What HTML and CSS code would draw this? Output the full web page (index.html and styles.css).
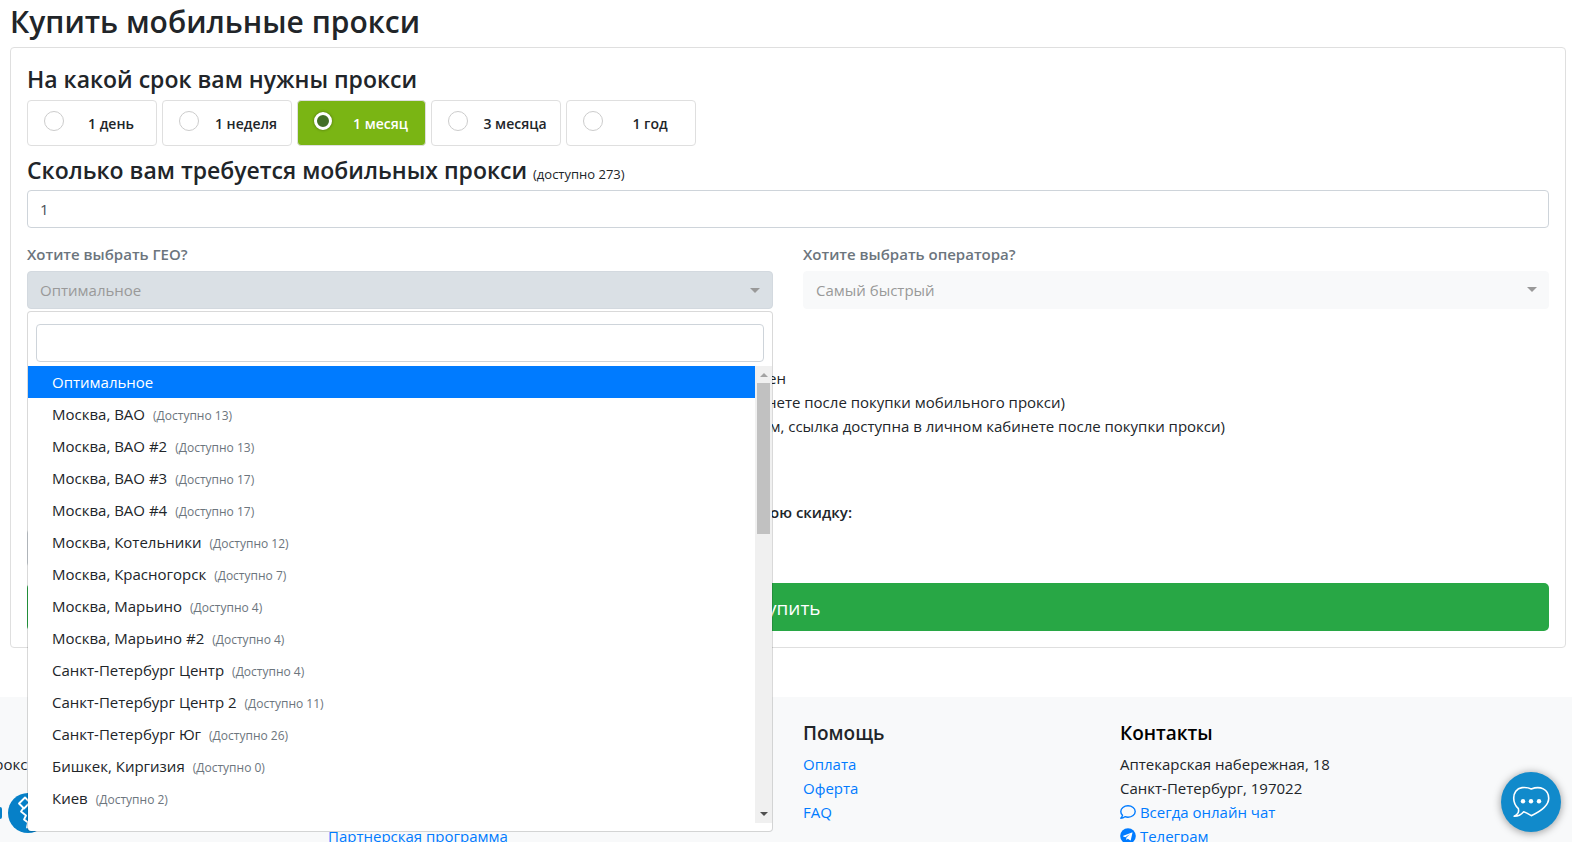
FILE: index.html
```html
<!DOCTYPE html>
<html lang="ru">
<head>
<meta charset="utf-8">
<title>Купить мобильные прокси</title>
<link rel="stylesheet" href="styles.css">
</head>
<body>
<main class="page">
  <h1 class="title">Купить мобильные прокси</h1>
  <form class="card">
    <fieldset class="terms">
      <legend class="heading">На какой срок вам нужны прокси</legend>
      <div class="term-list">
        <label class="term"><input class="term-radio" type="radio" name="term"><span class="term-text">1 день</span></label>
        <label class="term"><input class="term-radio" type="radio" name="term"><span class="term-text">1 неделя</span></label>
        <label class="term term-active"><input class="term-radio" type="radio" name="term" checked><span class="term-text">1 месяц</span></label>
        <label class="term"><input class="term-radio" type="radio" name="term"><span class="term-text">3 месяца</span></label>
        <label class="term"><input class="term-radio" type="radio" name="term"><span class="term-text">1 год</span></label>
      </div>
    </fieldset>
    <label class="heading count-label" for="count">Сколько вам требуется мобильных прокси <small class="count-note">(доступно 273)</small></label>
    <input class="field" id="count" type="text" value="1">
    <div class="choices">
      <div class="choice">
        <label class="choice-label" for="geo">Хотите выбрать ГЕО?</label>
        <button class="picker picker-open" id="geo" type="button" aria-expanded="true">Оптимальное</button>
        <div class="menu">
          <input class="field menu-search" type="text" aria-label="Поиск">
          <div class="menu-body">
            <ul class="options" role="listbox">
              <li class="option option-active" role="option" aria-selected="true">Оптимальное</li>
              <li class="option" role="option">Москва, ВАО<small class="stock">(Доступно 13)</small></li>
              <li class="option" role="option">Москва, ВАО #2<small class="stock">(Доступно 13)</small></li>
              <li class="option" role="option">Москва, ВАО #3<small class="stock">(Доступно 17)</small></li>
              <li class="option" role="option">Москва, ВАО #4<small class="stock">(Доступно 17)</small></li>
              <li class="option" role="option">Москва, Котельники<small class="stock">(Доступно 12)</small></li>
              <li class="option" role="option">Москва, Красногорск<small class="stock">(Доступно 7)</small></li>
              <li class="option" role="option">Москва, Марьино<small class="stock">(Доступно 4)</small></li>
              <li class="option" role="option">Москва, Марьино #2<small class="stock">(Доступно 4)</small></li>
              <li class="option" role="option">Санкт-Петербург Центр<small class="stock">(Доступно 4)</small></li>
              <li class="option" role="option">Санкт-Петербург Центр 2<small class="stock">(Доступно 11)</small></li>
              <li class="option" role="option">Санкт-Петербург Юг<small class="stock">(Доступно 26)</small></li>
              <li class="option" role="option">Бишкек, Киргизия<small class="stock">(Доступно 0)</small></li>
              <li class="option" role="option">Киев<small class="stock">(Доступно 2)</small></li>
            </ul>
            <div class="scroll"><span class="scroll-up"></span><span class="scroll-thumb"></span><span class="scroll-down"></span></div>
          </div>
        </div>
      </div>
      <div class="choice">
        <label class="choice-label" for="operator">Хотите выбрать оператора?</label>
        <div class="select-wrap"><select class="picker" id="operator"><option>Самый быстрый</option></select></div>
      </div>
    </div>
    <div class="notes">
      <p class="note note-short">обмен</p>
      <p class="note note-medium">кабинете после покупки мобильного прокси)</p>
      <p class="note note-long">м, ссылка доступна в личном кабинете после покупки прокси)</p>
    </div>
    <label class="promo-label" for="promo">свою скидку:</label>
    <input class="field promo" id="promo" type="text">
    <button class="buy" type="button">Купить</button>
  </form>
</main>
<footer class="footer">
  <div class="about">
    <p class="about-text">прокси</p>
    <div class="payments">
      <span class="pay-dot"></span>
      <svg class="pay" viewBox="0 0 40 40" aria-hidden="true"><circle cx="20" cy="20" r="20" fill="#0680c8"/><path d="M17 4.500l-6 6 5 5 6-6zM15.500 15l-2.500 3.500 5 4-2 4 4 3-1 5 12-12" fill="none" stroke="#fff" stroke-width="1.800" stroke-linejoin="round"/></svg>
    </div>
  </div>
  <div class="partners"><a class="link" href="#">Партнерская программа</a></div>
  <nav>
    <h2 class="foot-title">Помощь</h2>
    <a class="link" href="#">Оплата</a>
    <a class="link" href="#">Оферта</a>
    <a class="link" href="#">FAQ</a>
  </nav>
  <address class="contacts">
    <h2 class="foot-title foot-title-dark">Контакты</h2>
    <span>Аптекарская набережная, 18</span>
    <span>Санкт-Петербург, 197022</span>
    <a class="link" href="#"><svg class="link-icon" viewBox="0 0 16 16"><path d="M8 1.800c4 0 7.200 2.500 7.200 5.700S12 13.200 8 13.200c-1.100 0-2.200-.2-3.100-.5C3.900 13.500 2.500 14.200.8 14.200c.9-1 1.500-2 1.700-2.900C1.400 10.300.8 9 .8 7.500.8 4.300 4 1.800 8 1.800z" fill="none" stroke="currentColor" stroke-width="1.400" stroke-linejoin="round"/></svg> Всегда онлайн чат</a>
    <a class="link" href="#"><svg class="link-icon" viewBox="0 0 16 16"><circle cx="8" cy="8" r="7.800" fill="currentColor"/><path d="M12 4.400L3.300 7.800c-.5.200-.5.600 0 .7l2 .7 4.700-3.200-3.700 3.800V12l1.500-1.200 2.200 1.500c.4.200.7.100.8-.4L12.400 5c.1-.6-.1-.7-.4-.6z" fill="#fff"/></svg> Телеграм</a>
  </address>
</footer>
<button class="chat" type="button" aria-label="Чат">
  <svg class="chat-icon" viewBox="0 0 60 60"><path d="M30.300 17C27 15.300 24 15.300 21 15.600 15.500 16.300 12.700 21 12.700 26c0 5 2 8.200 4.700 10.700.9 3-.8 5.800-4.200 7.600 3.800.2 6.800-1.600 9.500-4.600 2.600.8 5.100 2.400 7.600 4 8-3.700 17.400-9 17.400-17.400C47.700 17 39 13.500 30.300 17z" fill="none" stroke="#fff" stroke-width="1.600" stroke-linejoin="round"/><g fill="#fff"><circle cx="22" cy="29.300" r="2.200"/><circle cx="30" cy="29.300" r="2.200"/><circle cx="38" cy="29.300" r="2.200"/></g></svg>
</button>
</body>
</html>
```
FILE: styles.css
```css
* { box-sizing: border-box; }
body {
  margin: 0;
  height: 100vh;
  overflow: hidden;
  display: flex;
  flex-direction: column;
  background: #fff;
  color: #212529;
  font: 15px/24px "Open Sans", "Noto Sans", sans-serif;
}
button, input, select { font: inherit; }
h1, h2, p, ul { margin: 0; padding: 0; font-weight: inherit; }
.page { padding: 3px 6px 0 10px; flex: none; }
.title { font-size: 30px; line-height: 38px; font-weight: 600; margin-bottom: 6px; }
.card {
  border: 1px solid #dfdfdf;
  border-radius: 4px;
  padding: 16px;
  display: flex;
  flex-direction: column;
}
.terms { border: 0; margin: 0; padding: 0; }
.heading { font-size: 23px; line-height: 30px; font-weight: 600; padding: 0; }
.term-list { display: flex; gap: 5px; margin-top: 6px; }
.term {
  width: 130px;
  height: 46px;
  border: 1px solid #dfdfdf;
  border-radius: 4px;
  padding: 0 12px 0 16px;
  display: flex;
  align-items: center;
  font-size: 14px;
  font-weight: 600;
}
.term-active { width: 129px; background: #7ab514; color: #fff; }
.term-radio {
  appearance: none;
  flex: none;
  width: 20px;
  height: 20px;
  margin: 0 0 4px;
  border: 1px solid #ccc;
  border-radius: 50%;
  background: #fff;
}
.term-radio:checked { border: 3px solid #fff; background: #436f26; box-shadow: 0 0 3px rgba(0, 0, 0, .4); width: 18px; height: 18px; margin-right: 2px; }
.term-text { flex: 1; text-align: center; padding: 2px 0 0 14px; white-space: nowrap; }
.count-label { margin: 9px 0 1px; }
.count-note { font-size: 13px; font-weight: 400; }
.field {
  display: block;
  width: 100%;
  height: 38px;
  border: 1px solid #ced4da;
  border-radius: 4px;
  padding: 6px 12px;
  color: #495057;
  background: #fff;
}
.choices { display: grid; grid-template-columns: 1fr 1fr; gap: 30px; margin-top: 14px; }
.choice { position: relative; }
.choice-label { display: block; margin-bottom: 5px; color: #6c757d; font-weight: 600; font-size: 15px; }
.picker {
  appearance: none;
  display: block;
  width: 100%;
  height: 38px;
  border: 1px solid #f8f9fa;
  border-radius: 4px;
  padding: 0 12px;
  background: #f8f9fa;
  color: #999;
  text-align: left;
}
.picker-open { background: #dae0e5; border-color: #d3d9df; }
.picker-open, .select-wrap { position: relative; }
.picker-open::after, .select-wrap::after {
  content: "";
  position: absolute;
  right: 12px;
  top: 16px;
  border: 5px solid transparent;
  border-top-color: #999;
  border-bottom: 0;
}
.menu {
  position: absolute;
  z-index: 2;
  top: 69px;
  left: 0;
  right: 0;
  padding: 12px 0 8px;
  border: 1px solid rgba(0, 0, 0, .15);
  border-radius: 4px;
  background: #fff;
  background-clip: padding-box;
}
.menu-search { width: auto; margin: 0 8px 4px; min-width: calc(100% - 16px); }
.menu-body { display: flex; height: 457px; }
.options { flex: 1; list-style: none; overflow: hidden; }
.option { padding: 4px 24px; height: 32px; white-space: nowrap; }
.option-active { background: #007bff; color: #fff; }
.stock { margin-left: 8px; font-size: 12px; color: #6c757d; }
.scroll { width: 17px; background: #f0f0f0; display: flex; flex-direction: column; align-items: center; }
.scroll-up { margin: 7px 0 6px; border: 4px solid transparent; border-bottom-color: #a3a3a3; border-top: 0; }
.scroll-thumb { width: 13px; height: 151px; background: #c1c1c1; }
.scroll-down { margin: auto 0 7px; border: 4px solid transparent; border-top-color: #505050; border-bottom: 0; }
.notes { margin-top: 57px; }
.note { text-align: right; }
.note-short { width: 759px; }
.note-medium { width: 1038px; }
.note-long { width: 1198px; }
.promo-label { width: 825px; margin: 62px 0 5px; text-align: right; font-weight: 600; font-size: 15px; }
.promo { width: 48%; }
.buy {
  margin-top: 16px;
  height: 48px;
  border: 0;
  border-radius: 5px;
  padding: 2px 0 0;
  background: #28a745;
  color: #fff;
  font-size: 19px;
}
.footer {
  flex: 1;
  margin-top: 49px;
  padding-top: 24px;
  background: #f8f9fa;
  display: grid;
  grid-template-columns: 328fr 475fr 317fr 452fr;
}
.foot-title { font-size: 19px; line-height: 24px; font-weight: 600; margin-bottom: 7px; }
.foot-title-dark { color: #000; }
.link { display: block; color: #007bff; text-decoration: none; }
.link-icon { width: 16px; height: 16px; vertical-align: -2px; }
.contacts { font-style: normal; }
.contacts span { display: block; }
.about { padding-top: 31px; overflow: hidden; }
.about-text { margin-left: -15px; }
.payments { display: flex; align-items: center; gap: 6px; margin-top: 17px; }
.pay-dot { width: 2px; height: 12px; border-radius: 0 6px 6px 0; background: #0680c8; }
.pay { width: 40px; height: 40px; }
.partners { padding-top: 103px; }
.chat {
  position: fixed;
  z-index: 3;
  right: 11px;
  bottom: 10px;
  width: 60px;
  height: 60px;
  padding: 0;
  border: 0;
  border-radius: 50%;
  background: #118acb;
  box-shadow: 0 1px 8px rgba(0, 0, 0, .4);
}
.chat-icon { display: block; width: 60px; height: 60px; }
```
